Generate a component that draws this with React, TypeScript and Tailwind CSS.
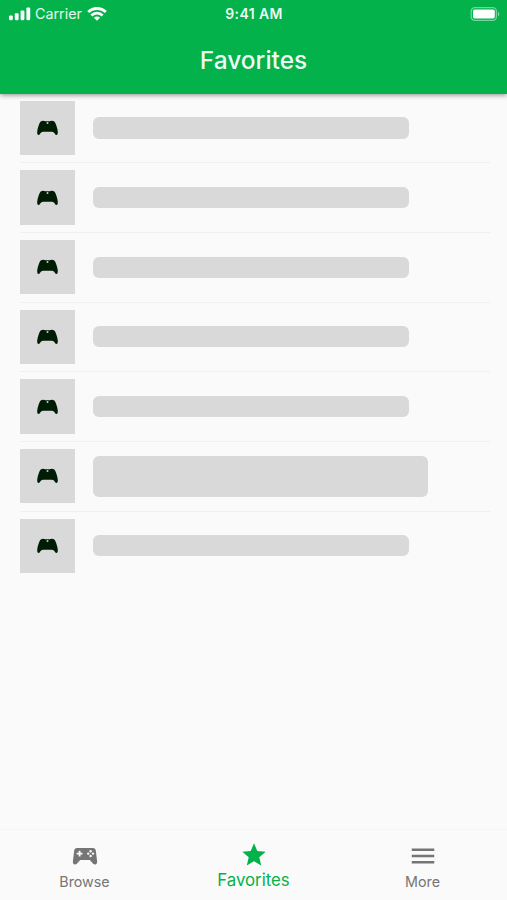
import { MdMenu, MdStar } from 'react-icons/md';

const rows = [
  { id: 1, bar: 'w-[315.5px] h-[22px]' },
  { id: 2, bar: 'w-[315.5px] h-[21px]' },
  { id: 3, bar: 'w-[315.5px] h-[21px]' },
  { id: 4, bar: 'w-[315.5px] h-[21px]' },
  { id: 5, bar: 'w-[315.5px] h-[21px]' },
  { id: 6, bar: 'w-[335px] h-[41px]' },
  { id: 7, bar: 'w-[315.5px] h-[21px]' },
];

function StatusBar() {
  return (
    <div className="grid h-7 grid-cols-3 items-center pl-[9px] pr-[6px]">
      <div className="flex items-center">
        <svg width="22" height="14" viewBox="0 0 22 14" fill="white">
          <rect x="0" y="8.5" width="3.8" height="4.7" rx="1.1" />
          <rect x="5.8" y="6.2" width="3.8" height="7" rx="1.1" />
          <rect x="11.6" y="3.4" width="3.8" height="9.8" rx="1.1" />
          <rect x="17.4" y="0.4" width="3.8" height="12.8" rx="1.1" />
        </svg>
        <span className="ml-[4px] text-[14.3px] leading-none text-white/90">Carrier</span>
        <svg className="ml-[5px]" width="20" height="14" viewBox="0 0 20 14" fill="none" stroke="white" strokeWidth="2.8">
          <path d="M1.2 5.1a12.6 12.6 0 0 1 17.6 0" />
          <path d="M4.4 8.5a8 8 0 0 1 11.2 0" />
          <path d="M10 13.8 6.9 10.7a4.4 4.4 0 0 1 6.2 0z" fill="white" stroke="none" />
        </svg>
      </div>
      <span className="pr-[2px] text-center text-[14px] font-semibold leading-none tracking-[0.4px] text-white/95">
        9:41 AM
      </span>
      <div className="flex justify-end">
        <svg width="31" height="14" viewBox="0 0 31 14" fill="none">
          <rect x="1.2" y="0.7" width="25.2" height="12.6" rx="3.6" stroke="white" strokeOpacity="0.45" strokeWidth="1.3" />
          <rect x="3" y="2.5" width="21.8" height="9" rx="1.8" fill="white" />
          <path d="M28 4.8a2.6 2.6 0 0 1 0 4.6z" fill="white" fillOpacity="0.5" />
        </svg>
      </div>
    </div>
  );
}

function Controller() {
  return (
    <svg className="mt-px" width="23" height="17" viewBox="0 0 23 17">
      <path
        d="M4.4 1.8C5.2 1.1 6.2.8 7.4.8c.8 0 1.1.4 1.9.4h4.4c.8 0 1.1-.4 1.9-.4 1.200 0 2.200.3 3 1 1.500 2.400 2.900 6.600 3.200 10 .1 1.700-.3 3.200-1.200 3.200-1.300 0-1.700-1.500-2.700-2.500-.6-.6-1.200-.8-2-.8H7.100c-.8 0-1.400.2-2 .8-1 1-1.400 2.500-2.700 2.500-.9 0-1.300-1.500-1.200-3.200.3-3.400 1.700-7.600 3.200-10z"
        fill="#001c04"
      />
      <circle cx="11.5" cy="2.9" r="1" fill="#c4cec4" />
    </svg>
  );
}

function BrowseIcon() {
  return (
    <svg className="my-[5px]" width="26" height="19" viewBox="0 0 26 19">
      <path
        d="M5 1h16c1.600 0 2.600 1 2.800 2.600l1.300 10.700c.3 2-.6 3.200-2 3.200-.8 0-1.400-.3-1.900-.8L17.800 13H8.200l-3.400 3.700c-.5.5-1.100.8-1.900.8-1.400 0-2.300-1.200-2-3.200L2.200 3.600C2.400 2 3.400 1 5 1z"
        fill="#757575"
      />
      <path d="M7.600 3.700v5.800M4.700 6.600h5.800" stroke="#fafafa" strokeWidth="1.8" />
      <g fill="#fafafa">
        <circle cx="18.600" cy="4.200" r="1.200" />
        <circle cx="18.600" cy="9" r="1.200" />
        <circle cx="16.200" cy="6.600" r="1.200" />
        <circle cx="21" cy="6.600" r="1.200" />
      </g>
    </svg>
  );
}

export default function App() {
  return (
    <div className="flex h-screen w-full flex-col overflow-hidden bg-[#fafafa] font-['Inter',sans-serif]">
      <header className="z-10 h-[93.6px] shrink-0 bg-[#03b24b] shadow-[0_1px_5px_rgba(0,0,0,0.45)]">
        <StatusBar />
        <h1 className="pt-[14px] text-center text-[24.5px] font-medium leading-9 text-white/95">Favorites</h1>
      </header>

      <main className="flex-1">
        {rows.map((row) => (
          <div key={row.id} className="ml-5 mr-[17px] flex h-[69.67px] items-center border-b border-[#f0f0f0] last:border-transparent">
            <div className="flex size-[54.5px] shrink-0 items-center justify-center bg-[#d9d9d9]">
              <Controller />
            </div>
            <div className={`ml-[18.9px] rounded-[6px] bg-[#d9d9d9] ${row.bar}`} />
          </div>
        ))}
      </main>

      <nav className="grid h-[71px] shrink-0 grid-cols-3 border-t border-[#f4f4f4] text-[#757575]">
        <div className="flex flex-col items-center pt-[12px]">
          <BrowseIcon />
          <span className="mt-px text-[14.3px] leading-5">Browse</span>
        </div>
        <div className="flex flex-col items-center pt-[11px] text-[#03b24b]">
          <MdStar size={28} />
          <span className="mt-[1px] text-[16.8px] leading-5">Favorites</span>
        </div>
        <div className="flex flex-col items-center pt-[11px]">
          <MdMenu size={30} />
          <span className="mt-[1px] text-[14.3px] leading-5">More</span>
        </div>
      </nav>
    </div>
  );
}
